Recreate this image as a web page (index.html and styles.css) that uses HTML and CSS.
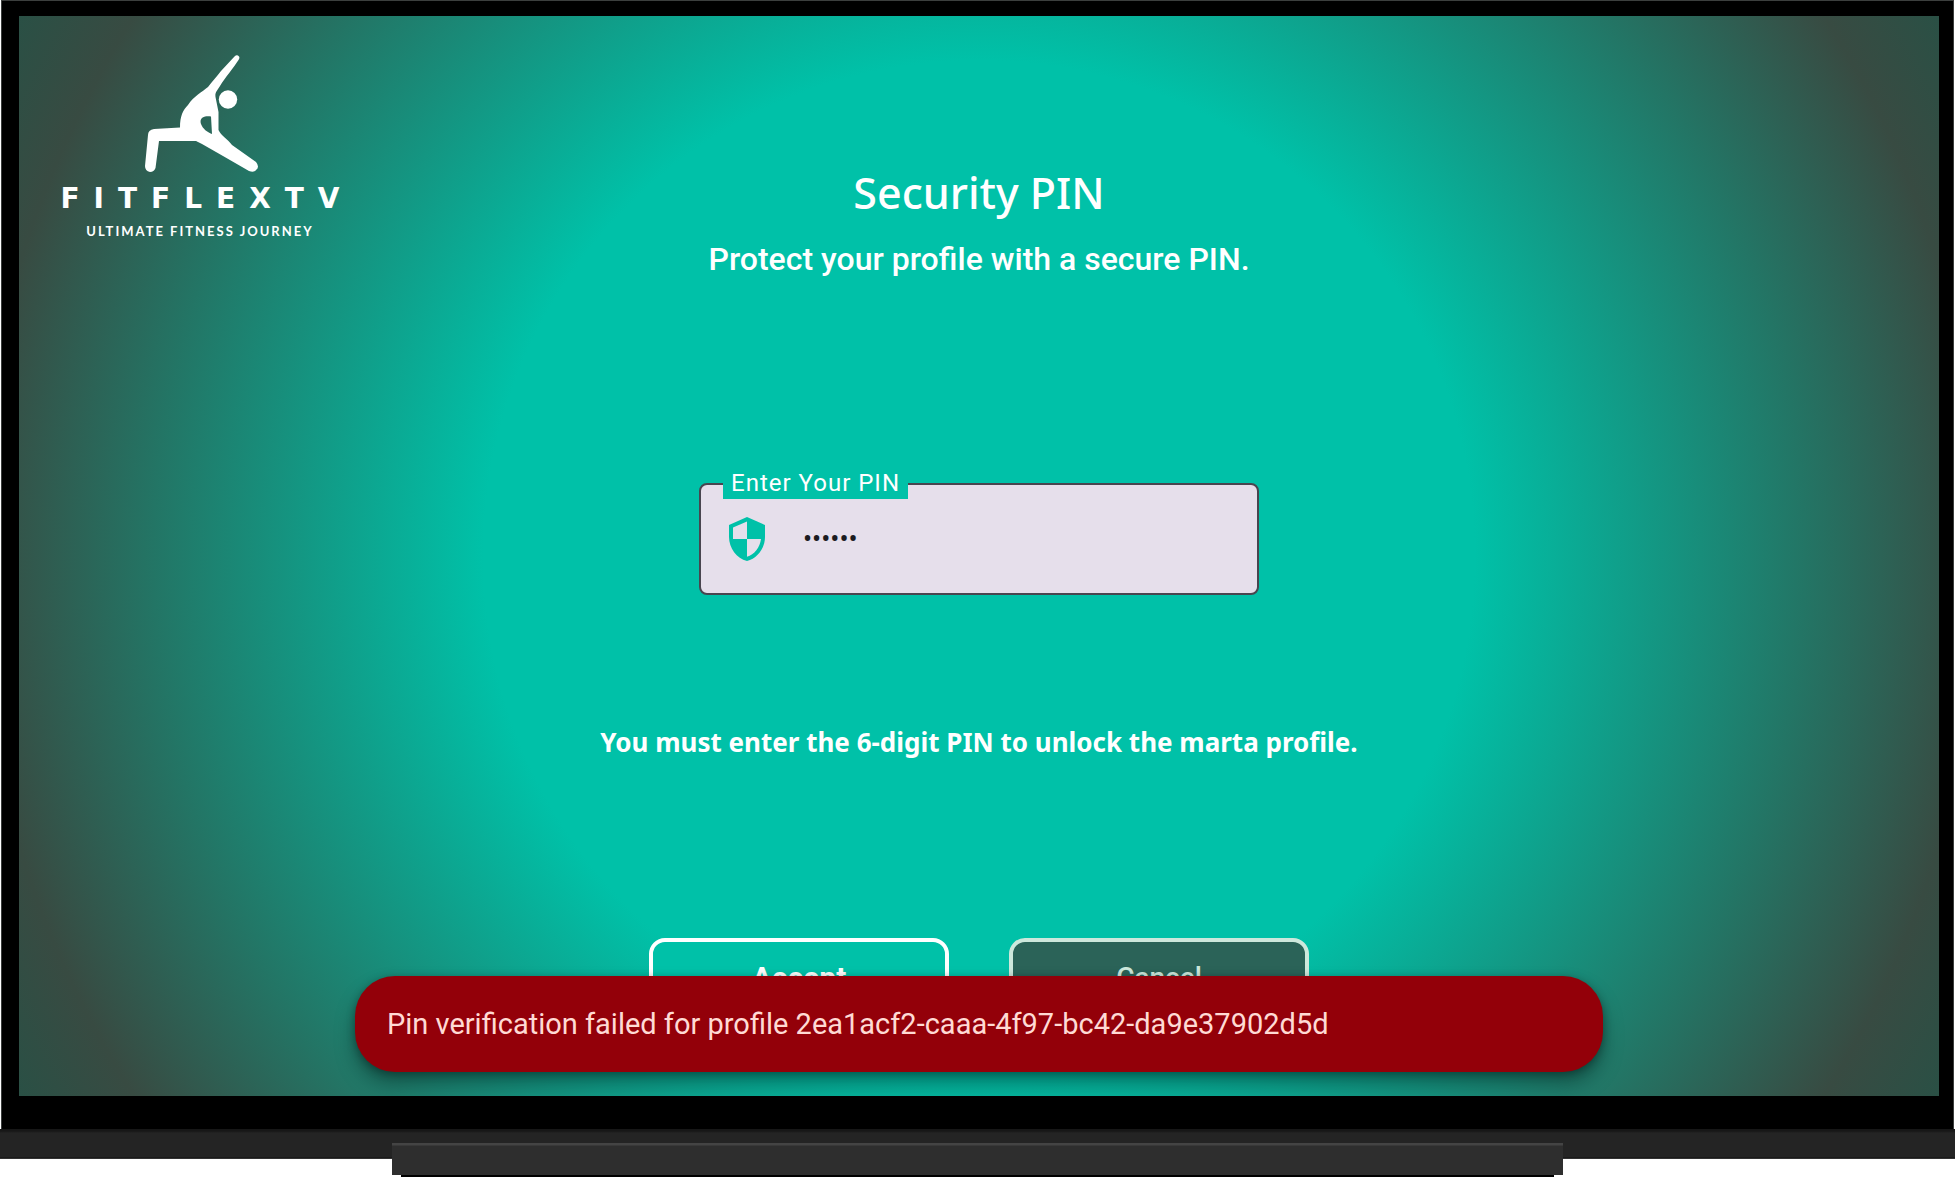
FILE: index.html
```html
<!DOCTYPE html>
<html lang="en">
<head>
  <meta charset="utf-8">
  <title>FitFlexTV - Security PIN</title>
  <link rel="stylesheet" href="styles.css">
</head>
<body>
  <div class="tv">
    <div class="bezel">
      <div class="screen">
        <header class="brand">
          <svg class="brand-figure" viewBox="0 0 116 118" aria-hidden="true">
            <path fill-rule="evenodd" d="M92.500 1.500Q95-1 97 1.500Q98 3 96.500 5C92 12 83 23 78 31C74 37 73 38 73.500 42L76.500 57V75C79 81 86 84 90 90L114 107Q118 112 114 115Q112 118 107 116L81 101L60 89L54 86H17L13.500 113Q12 117 8 117Q3 116 3 111L6 80Q6 75 12 74L38 72.500C38 61 41 55 46 50C52 41 60 37 66 32C70 27 75 21 79 16ZM69 61.500C62 60.500 57 63 59 69C61 74 65 77 70 79Z"/>
            <circle cx="86" cy="44.500" r="9.200"/>
          </svg>
          <div class="brand-name">FITFLEXTV</div>
          <div class="brand-tagline">ULTIMATE FITNESS JOURNEY</div>
        </header>
        <main class="content">
          <h1 class="title">Security PIN</h1>
          <p class="subtitle">Protect your profile with a secure PIN.</p>
          <div class="field">
            <label class="field-label" for="pin">Enter Your PIN</label>
            <svg class="field-icon" viewBox="0 0 24 24" aria-hidden="true">
              <path d="M12 1L3 5v6c0 5.550 3.840 10.740 9 12c5.160-1.260 9-6.450 9-12V5zm0 10.990h7c-.530 4.120-3.280 7.790-7 8.940V12H5V6.300l7-3.110z"/>
            </svg>
            <input class="field-input" id="pin" type="password" value="123456" maxlength="6">
          </div>
          <p class="hint">You must enter the 6-digit PIN to unlock the marta profile.</p>
          <div class="actions">
            <button class="button button-primary" type="button">Accept</button>
            <button class="button button-muted" type="button">Cancel</button>
          </div>
        </main>
        <div class="toast" role="alert">Pin verification failed for profile 2ea1acf2-caaa-4f97-bc42-da9e37902d5d</div>
      </div>
    </div>
    <div class="base">
      <div class="foot"></div>
    </div>
  </div>
</body>
</html>
```
FILE: styles.css
```css
* {
  box-sizing: border-box;
}

body {
  margin: 0;
  background: #fff;
  font-family: Roboto, sans-serif;
  color: #fff;
}

.tv {
  display: flex;
  flex-direction: column;
  min-height: 100vh;
}

.bezel {
  flex: 1;
  display: flex;
  margin: 0 1px;
  padding: 15px 14px 33px 17px;
  background: #000;
  border: 1px solid #3c3f3e;
  border-bottom: 0;
}

.screen {
  position: relative;
  flex: 1;
  overflow: hidden;
  background: radial-gradient(circle farthest-corner, #00c1a8 45%, #237565 75%, #384b42 91%, #2a5045 100%);
}

.brand {
  position: absolute;
  top: 39px;
  left: 38px;
  width: 286px;
  display: flex;
  flex-direction: column;
  align-items: center;
}

.brand-figure {
  width: 116px;
  height: 118px;
  fill: #fff;
}

.brand-name {
  margin-top: 10px;
  margin-right: -14px;
  font: 700 28px/32px "DejaVu Sans", sans-serif;
  font-kerning: none;
  letter-spacing: 14px;
}

.brand-tagline {
  margin-top: 8px;
  font: 700 13px/16px Lato, sans-serif;
  letter-spacing: 2px;
  white-space: nowrap;
}

.content {
  display: flex;
  flex-direction: column;
  align-items: center;
  padding-top: 147px;
}

.title {
  margin: 0;
  font: 500 43px/60px "Noto Sans", sans-serif;
}

.subtitle {
  margin: 16px 0 0;
  font-size: 32px;
  line-height: 40px;
  font-weight: 500;
}

.field {
  position: relative;
  display: flex;
  align-items: center;
  gap: 32px;
  width: 560px;
  height: 112px;
  margin-top: 204px;
  padding: 0 22px;
  background: #e6dfeb;
  border: 2px solid #49454f;
  border-radius: 8px;
}

.field-label {
  position: absolute;
  top: -18px;
  left: 22px;
  padding: 0 8px;
  background: #00c1a8;
  font-size: 24px;
  line-height: 32px;
  letter-spacing: 1px;
}

.field-icon {
  width: 48px;
  height: 48px;
  fill: #00c1a8;
}

.field-input {
  flex: 1;
  min-width: 0;
  padding: 0;
  border: 0;
  outline: 0;
  background: none;
  color: #1c1b1f;
  font: 27px/32px Roboto, sans-serif;
}

.hint {
  margin: 127px 0 0;
  font: 700 26px/40px "Noto Sans", sans-serif;
}

.actions {
  display: flex;
  gap: 60px;
  margin-top: 176px;
}

.button {
  width: 300px;
  height: 80px;
  border: 4px solid #fff;
  border-radius: 16px;
  background: #00c1a8;
  color: #fff;
  font: 500 28px/40px Roboto, sans-serif;
}

.button-primary {
  font-size: 30px;
  font-weight: 700;
}

.button-muted {
  border-color: #cde8dc;
  background: #2b6358;
  color: #cde8dc;
}

.toast {
  position: absolute;
  left: 336px;
  right: 336px;
  bottom: 24px;
  padding: 28px 32px;
  border-radius: 40px;
  background: #930009;
  box-shadow: 0 12px 20px rgba(0, 0, 0, 0.35), 0 2px 8px rgba(0, 0, 0, 0.3);
  color: #ffdad4;
  font-size: 29px;
  line-height: 40px;
}

.base {
  display: flex;
  height: 48px;
  padding: 14px 392px 0;
  background: linear-gradient(#171717 2px, #242424 4px, #242424 28px, #111 29px, #555 30px, #fff 30px);
}

.foot {
  flex: 1;
  height: 34px;
  background:
    linear-gradient(#000, #000) bottom / calc(100% - 18px) 2px no-repeat,
    linear-gradient(#444 2px, #2e2e2e 3px) top / 100% 32px no-repeat;
}
```
